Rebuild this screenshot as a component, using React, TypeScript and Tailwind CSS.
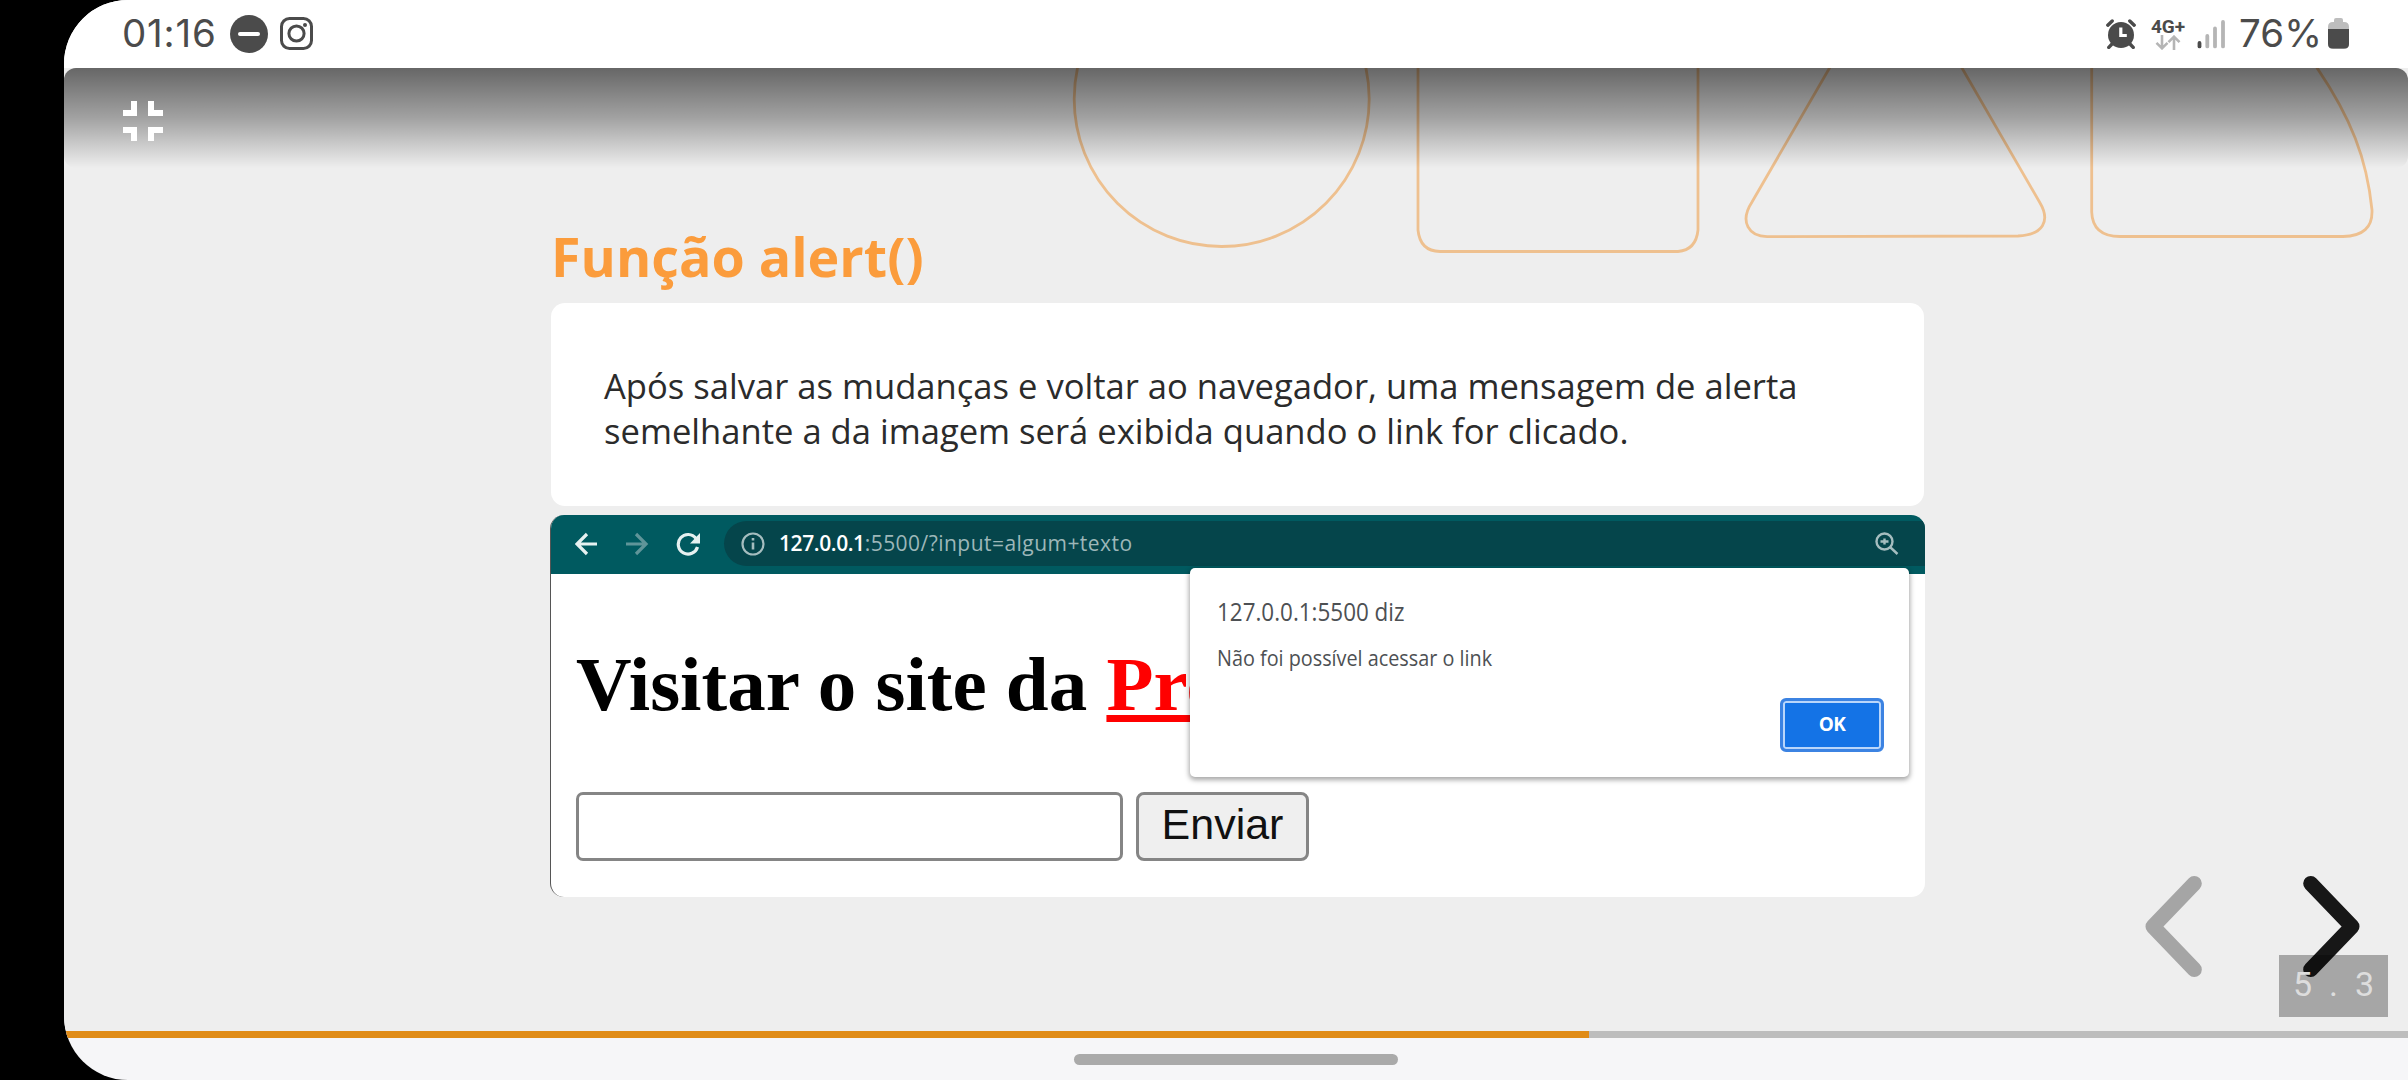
function StatusBar() {
  return (
    <header className="flex h-[68px] shrink-0 items-center justify-between bg-white pb-px pl-[58px] pr-[59px] font-[Inter,sans-serif] text-[#4b4b4b]">
      <div className="flex h-full items-center">
        <span className="w-[108px] whitespace-nowrap text-[38.5px] leading-none font-normal tracking-[0.8px]">01:16</span>
        <svg className="h-[38px] w-[38px]" viewBox="0 0 38 38">
          <circle cx="19" cy="19" r="19" fill="#4b4b4b" />
          <path d="M10 19h18" stroke="#fff" strokeWidth="4" strokeLinecap="round" />
        </svg>
        <svg className="ml-3 h-[34px] w-[34px]" viewBox="0 0 34 34" fill="none" stroke="#4b4b4b" strokeWidth="3">
          <rect x="1.5" y="1.5" width="30" height="30" rx="8" />
          <circle cx="16.5" cy="16.5" r="7.6" />
          <circle cx="25" cy="8" r="2" fill="#4b4b4b" stroke="none" />
        </svg>
      </div>
      <div className="flex h-full items-center">
        <svg className="h-[30px] w-[30px]" viewBox="0 0 30 30">
          <circle cx="15" cy="16" r="13" fill="#4b4b4b" />
          <path d="M1.8 6.2 6.2 2M28.2 6.2 23.8 2M6 25l-3.2 3.4M24 25l3.2 3.4" stroke="#4b4b4b" strokeWidth="3.4" strokeLinecap="round" />
          <path d="M14.8 8.5v8h6" stroke="#fff" strokeWidth="3.2" fill="none" />
        </svg>
        <div className="ml-[15px] flex w-[34px] flex-col items-center">
          <span className="whitespace-nowrap font-[Roboto,sans-serif] text-[19px] leading-[17px] font-bold">4G+</span>
          <svg className="h-[15px] w-[26px]" viewBox="0 0 26 15" fill="none" stroke="#b5b5b5" strokeWidth="2.6">
            <path d="M7 0v13M1.5 7.8 7 13.3l5.5-5.5M19 15V2M13.500 7.200 19 1.700l5.500 5.500" />
          </svg>
        </div>
        <svg className="ml-3 h-[30px] w-[28px]" viewBox="0 0 28 30" strokeLinecap="round" strokeWidth="3.800" fill="none">
          <path d="M2.500 24v3.400" stroke="#4b4b4b" />
          <path d="M10.300 17v10.400M18 9.500v17.900M26 3v24.400" stroke="#b5b5b5" />
        </svg>
        <span className="ml-[14px] w-[84px] whitespace-nowrap text-[38.5px] leading-none font-normal tracking-[0.1px]">76%</span>
        <svg className="ml-[5px] h-[31px] w-[21px]" viewBox="0 0 21 31">
          <path d="M6 4V2q0-2 2-2h5q2 0 2 2v2h1q5 0 5 5v17q0 5-5 5H5q-5 0-5-5V9q0-5 5-5z" fill="#bdbdbd" />
          <path d="M0 11h21v15q0 4.500-5 4.500H5q-5 0-5-4.500z" fill="#4b4b4b" />
        </svg>
      </div>
    </header>
  );
}

function Decoration() {
  return (
    <svg className="absolute inset-x-0 top-0 h-[200px] w-[2344px]" viewBox="64 68 2344 200" fill="none" stroke="#eec08f" strokeWidth="2.8">
      <circle cx="1221.700" cy="99" r="147.500" />
      <path d="M1418 60V230Q1420 251 1440 251.500H1678Q1696 250 1698 230V60" />
      <path d="M1833 62 1752 202C1739 222 1749 237 1768 236.600L2018 236C2043 235 2051 221 2039.500 202L1958.500 62" />
      <path d="M2091.700 60V212Q2092.500 236.500 2120 236.500H2343Q2373 236 2372 210C2367 160 2352 118 2313 62" />
    </svg>
  );
}

function BrowserBar() {
  return (
    <div className="flex h-[59px] items-center bg-[#005a60] pb-[2px] pl-[24px]">
      <svg className="h-6 w-[125px] shrink-0" viewBox="0 0 125 24" fill="none" strokeWidth="3.200">
        <path d="M22 12H2M12 2 2 12l10 10" stroke="#e6f1f1" />
        <path d="M51 12h20M61 2l10 10-10 10" stroke="#5f9599" />
        <path d="M121 6.500A9.800 9.800 0 1 0 122.500 15" stroke="#e6f1f1" />
        <path d="M125 1v10.500h-10z" fill="#e6f1f1" />
      </svg>
      <div className="ml-6 flex h-[45px] flex-1 items-center rounded-l-full bg-[#05454b] pl-[17px] pr-[26px]">
        <svg className="h-6 w-6" viewBox="0 0 24 24" fill="none" stroke="#a5bdbf" strokeWidth="2.200">
          <circle cx="12" cy="12" r="10.500" />
          <path d="M12 10.500v7M12 6v2.500" strokeWidth="2.600" />
        </svg>
        <span className="ml-[14px] whitespace-nowrap font-['Open_Sans',sans-serif] text-[21px] leading-none tracking-[0.46px] text-[#9db7b9]">
          <b className="font-semibold tracking-[-0.4px] text-white">127.0.0.1</b>:5500/?input=algum+texto
        </span>
        <svg className="ml-auto h-[23px] w-[24px]" viewBox="0 0 24 23" fill="none" stroke="#a5bdbf" strokeWidth="2.400">
          <circle cx="9.500" cy="9.500" r="8" />
          <path d="M5.500 9.500h8M9.500 6.500v6M15 15l7.500 7" />
        </svg>
      </div>
    </div>
  );
}

function AlertDialog() {
  return (
    <div className="absolute top-[53px] right-[16px] flex h-[209px] w-[719px] flex-col rounded-[5px] bg-white pl-[27px] font-['Open_Sans',sans-serif] text-[#4d5053] shadow-[0_2px_5px_1px_rgba(0,0,0,0.35)]">
      <p className="mt-[28px] h-[30px] origin-left scale-x-[0.897] text-[25px] leading-[30px]">127.0.0.1:5500 diz</p>
      <p className="mt-[17px] h-[30px] origin-left scale-x-[0.943] text-[21px] leading-[30px]">Não foi possível acessar o link</p>
      <button className="mt-auto mr-[25px] mb-[25px] ml-auto h-[54px] w-[104px] rounded-[6px] border-3 border-[#3c83e2] bg-[#1473e6] pb-px text-[19px] font-bold tracking-[-0.5px] text-white shadow-[inset_0_0_0_2px_#b9d6fb]">OK</button>
    </div>
  );
}

function Slide() {
  return (
    <main className="relative flex-1 bg-[#eeeeee]">
      <Decoration />
      <div className="absolute inset-x-0 top-0 h-[100px] rounded-[12px] bg-linear-to-b from-black/57 via-black/32 to-black/0">
        <svg className="mt-[33px] ml-[59px] h-10 w-10" viewBox="0 0 40 40" fill="#fff">
          <path d="M8 0h6v15H0V9h8zM25 0h6v9h9v6H25zM0 26h14v14H8v-8H0zM25 26h15v6h-9v8h-6z" />
        </svg>
      </div>
      <div className="ml-[486px] w-[1375px] pt-[153px]">
        <h1 className="ml-px h-[82px] font-['Open_Sans',sans-serif] text-[53.8px] leading-[71px] font-bold text-[#fb9c3c]">Função alert()</h1>
        <section className="mx-px flex h-[203px] flex-col justify-center rounded-[14px] bg-white pt-[6px] pl-[53px] font-['Open_Sans',sans-serif] text-[34.58px] leading-[45px] text-[#2b2b2b]">
          <p className="whitespace-nowrap">Após salvar as mudanças e voltar ao navegador, uma mensagem de alerta</p>
          <p className="whitespace-nowrap">semelhante a da imagem será exibida quando o link for clicado.</p>
        </section>
        <section className="relative mt-[9px] h-[382px] overflow-hidden rounded-[14px] border-l border-[#555] bg-white">
          <BrowserBar />
          <h2 className="mt-[65px] ml-[25px] h-[90px] whitespace-nowrap font-['Liberation_Serif',serif] text-[77px] leading-[90px] font-bold text-black">
            Visitar o site da <span className="text-[#ff0000] underline decoration-[7px] underline-offset-[5px]">Pro</span>
          </h2>
          <div className="mt-[63px] ml-[25px] flex h-[69px] gap-[13px]">
            <input className="w-[547px] rounded-[7px] border-3 border-[#858585] bg-white" />
            <button className="w-[173px] rounded-[8px] border-3 border-[#858585] bg-[#efefef] pb-[4px] font-['Liberation_Sans',sans-serif] text-[43px] leading-none text-[#111]">Enviar</button>
          </div>
          <AlertDialog />
        </section>
      </div>
      <svg className="absolute top-[800px] right-0 h-[110px] w-[308px]" viewBox="2100 868 308 110" fill="none" strokeWidth="15" strokeLinecap="round" strokeLinejoin="round">
        <path d="M2194.300 883.500 2153 926.500l41.300 43" stroke="#a5a5a5" />
        <path d="M2310.700 883.500 2352 926.500l-41.300 43" stroke="#171717" />
      </svg>
      <div className="absolute right-5 bottom-[14px] flex h-[62px] w-[109px] items-center justify-between bg-black/30 px-[14px] pb-1 font-[Roboto,sans-serif] text-[34px] leading-none text-[#dddddd]">
        <span>5</span>
        <span>.</span>
        <span>3</span>
      </div>
    </main>
  );
}

export default function App() {
  return (
    <div className="h-[1080px] w-[2408px] overflow-hidden bg-black pl-16">
      <div className="flex h-full flex-col overflow-hidden rounded-l-[64px] bg-[#f6f6f8]">
        <StatusBar />
        <Slide />
        <div className="h-[7px] shrink-0 bg-[#bdbdbd]">
          <div className="h-full w-[1525px] bg-[#e08c18]" />
        </div>
        <footer className="flex h-[42px] shrink-0 pt-4 pl-[1010px]">
          <div className="h-[11px] w-[324px] rounded-full bg-[#aaaaaa]" />
        </footer>
      </div>
    </div>
  );
}
